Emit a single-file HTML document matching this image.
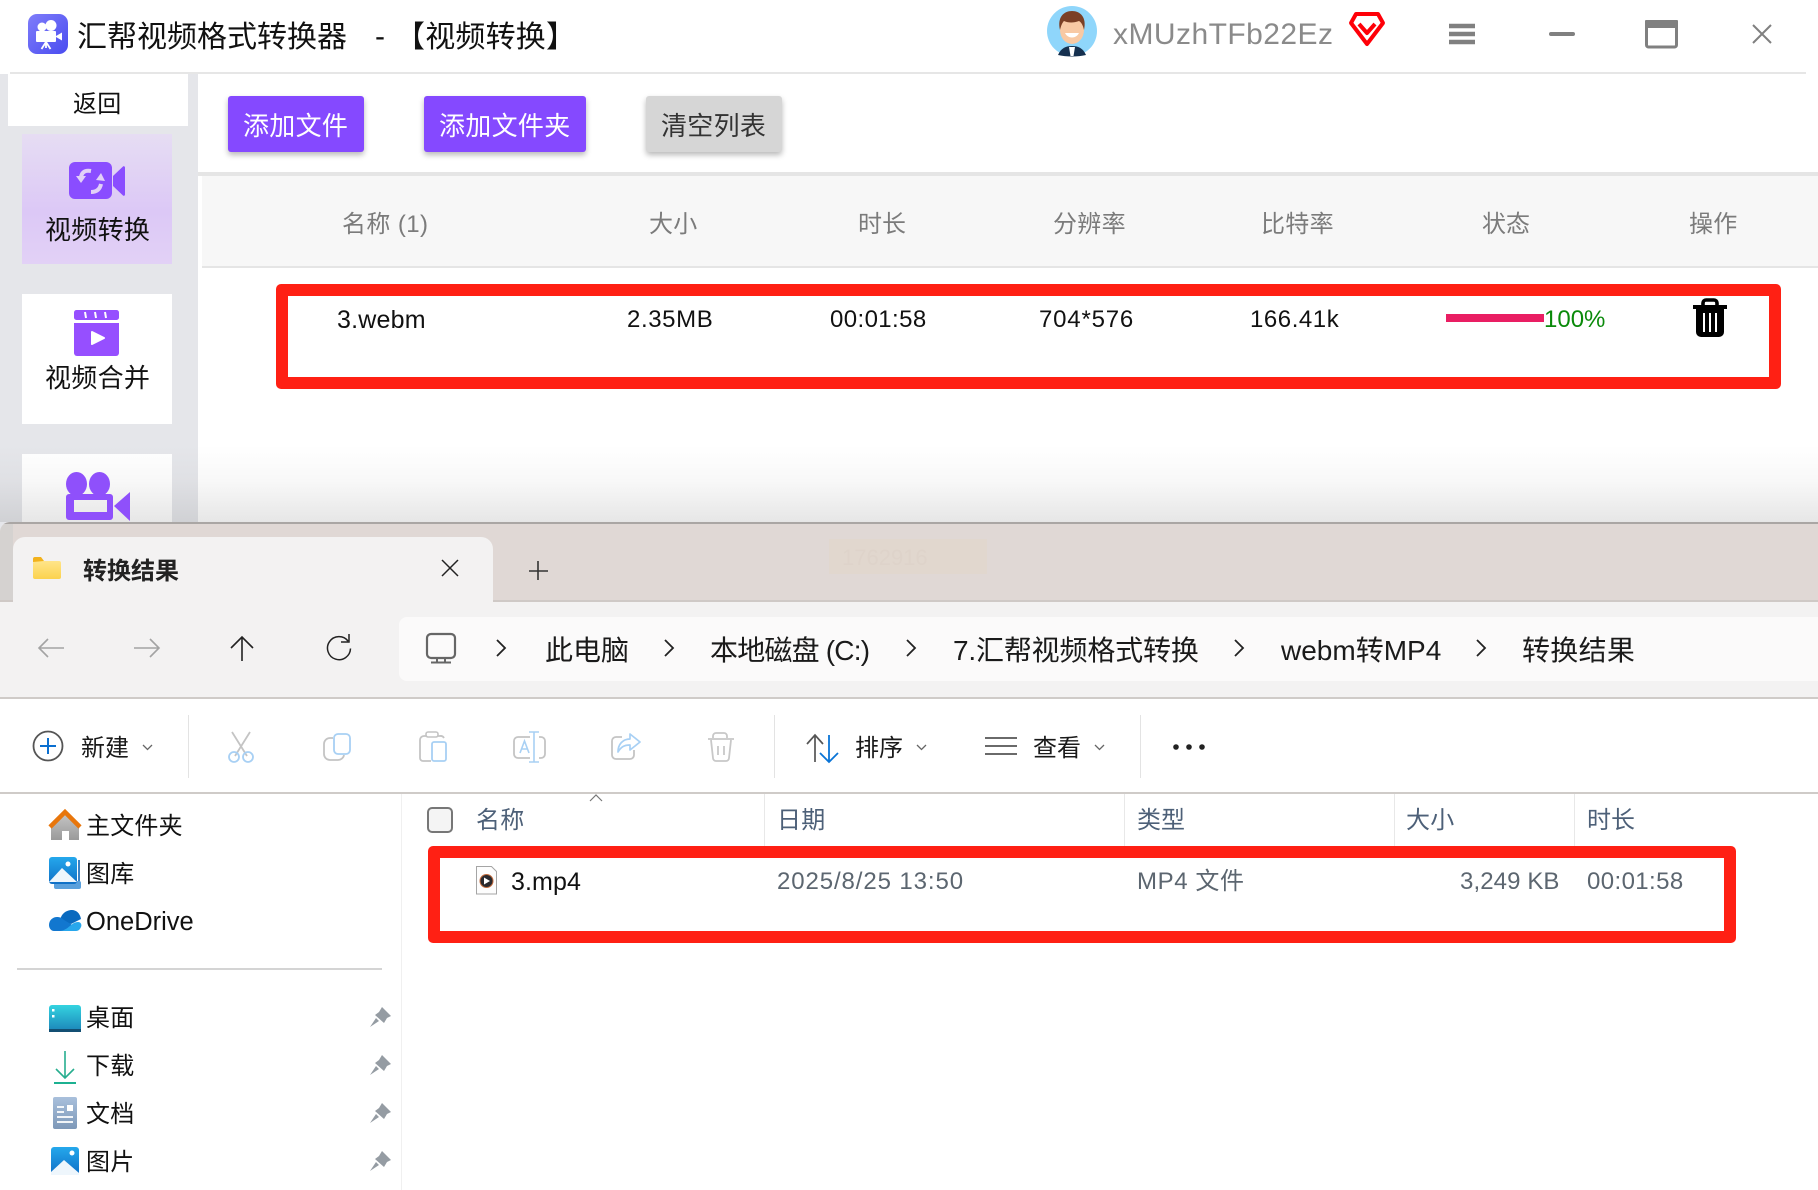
<!DOCTYPE html>
<html lang="zh-CN"><head><meta charset="utf-8"><title>汇帮视频格式转换器</title>
<style>
html,body{margin:0;padding:0;background:#fff}
#p{position:relative;width:1818px;height:1190px;overflow:hidden;background:#fff;font-family:"Liberation Sans","Noto Sans CJK SC",sans-serif;color:#111}
.b{position:absolute}
.t{position:absolute;white-space:nowrap;line-height:0;height:0;font-size:24px}
svg.o{position:absolute;left:0;top:0}
.btn{position:absolute;top:96px;height:56px;border-radius:3px;background:#8549ff;box-shadow:0 3px 6px rgba(0,0,0,.28)}
.h{color:#7b7b7b}
.nv{color:#5c6670}
.hd{color:#4d6078}
</style></head><body><div id="p">
<!-- App -->
<div class="b" style="left:10px;top:72px;width:1796px;height:2px;background:#e6e6e6"></div>
<div class="b" style="left:0;top:74px;width:198px;height:460px;background:#e5e6ea"></div>
<div class="b" style="left:8px;top:74px;width:180px;height:52px;background:#fff"></div>
<div class="b" style="left:22px;top:134px;width:150px;height:130px;background:linear-gradient(#e6ddf3,#dcc8f6 60%,#e2d1f6)"></div>
<div class="b" style="left:22px;top:294px;width:150px;height:130px;background:#fff"></div>
<div class="b" style="left:22px;top:454px;width:150px;height:80px;background:#fff"></div>
<div class="b" style="left:198px;top:172px;width:1620px;height:4px;background:#e5e5e5"></div>
<div class="b" style="left:202px;top:176px;width:1616px;height:90px;background:#f7f7f7"></div>
<div class="b" style="left:202px;top:266px;width:1616px;height:2px;background:#e5e5e5"></div>
<div class="btn" style="left:228px;width:136px"></div>
<div class="btn" style="left:424px;width:162px"></div>
<div class="btn" style="left:646px;width:136px;background:#d6d6d6"></div>

<div class="t" style="left:77px;top:38px;font-size:30px">汇帮视频格式转换器</div>
<div class="t" style="left:375px;top:37px;font-size:30px">-</div>
<div class="t" style="left:395px;top:38px;font-size:30px;letter-spacing:.2px">【视频转换】</div>
<div class="t" style="left:1113px;top:35px;font-size:30px;letter-spacing:.45px;color:#8a8a8a">xMUzhTFb22Ez</div>
<div class="t" style="left:73px;top:105px;letter-spacing:.3px">返回</div>
<div class="t" style="left:45px;top:230px;font-size:26px;letter-spacing:.3px">视频转换</div>
<div class="t" style="left:45px;top:378px;font-size:26px;letter-spacing:.3px">视频合并</div>
<div class="t" style="left:243px;top:126px;font-size:26px;letter-spacing:.3px;color:#fff">添加文件</div>
<div class="t" style="left:439px;top:126px;font-size:26px;letter-spacing:.3px;color:#fff">添加文件夹</div>
<div class="t" style="left:661px;top:126px;font-size:26px;letter-spacing:.3px;color:#333">清空列表</div>

<div class="t h" style="left:342px;top:225px;letter-spacing:.4px">名称 (1)</div>
<div class="t h" style="left:649px;top:225px;letter-spacing:.3px">大小</div>
<div class="t h" style="left:858px;top:225px">时长</div>
<div class="t h" style="left:1053px;top:225px;letter-spacing:.3px">分辨率</div>
<div class="t h" style="left:1261px;top:225px;letter-spacing:.3px">比特率</div>
<div class="t h" style="left:1482px;top:225px">状态</div>
<div class="t h" style="left:1689px;top:225px;letter-spacing:.3px">操作</div>

<div class="t" style="left:337px;top:320px;font-size:25px;letter-spacing:.2px">3.webm</div>
<div class="t" style="left:627px;top:320px;font-size:24px;letter-spacing:.6px">2.35MB</div>
<div class="t" style="left:830px;top:320px;font-size:24px;letter-spacing:.4px">00:01:58</div>
<div class="t" style="left:1039px;top:320px;font-size:24px;letter-spacing:.8px">704*576</div>
<div class="t" style="left:1250px;top:320px;font-size:24px;letter-spacing:.55px">166.41k</div>
<div class="b" style="left:1446px;top:314px;width:98px;height:8px;background:#e91e63"></div>
<div class="t" style="left:1544px;top:320px;font-size:24px;color:#0a8a0a">100%</div>
<div class="b" style="left:276px;top:284px;width:1505px;height:105px;box-sizing:border-box;border:12px solid #ff2014;border-radius:5px"></div>

<!-- fade above explorer -->
<div class="b" style="left:0;top:445px;width:1818px;height:77px;background:linear-gradient(rgba(90,90,90,0),rgba(90,90,90,.04) 45%,rgba(90,90,90,.15))"></div>

<!-- Explorer -->
<div class="b" style="left:0;top:522px;width:1818px;height:668px;background:#fff;border-radius:10px 0 0 0;overflow:hidden">
 <div class="b" style="left:0;top:0;width:1818px;height:79px;background:#e0d8d5;border-top:2px solid #aaa6a4;box-sizing:border-box"></div>
 <div class="b" style="left:0;top:2px;width:13px;height:77px;background:#d5d2d0"></div>
 <div class="b" style="left:829px;top:17px;width:158px;height:35px;background:#e1d7ce"></div>
 <div class="t" style="left:842px;top:36px;font-size:22px;color:#ded3ca">1762916</div>
 <div class="b" style="left:0;top:78px;width:1818px;height:2px;background:#cfc9c6"></div>
 <div class="b" style="left:0;top:80px;width:1818px;height:95px;background:#f3f2f2"></div>
 <div class="b" style="left:13px;top:15px;width:480px;height:70px;background:#f3f2f2;border-radius:12px 12px 0 0"></div>
 <div class="b" style="left:399px;top:95px;width:1419px;height:64px;background:#fbfafa;border-radius:8px 0 0 8px"></div>
 <div class="b" style="left:0;top:175px;width:1818px;height:2px;background:#cfcbc8"></div>
 <div class="b" style="left:0;top:270px;width:1818px;height:2px;background:#cfcbc8"></div>
 <div class="b" style="left:401px;top:272px;width:1px;height:396px;background:#f0f0f0"></div>
 <div class="b" style="left:17px;top:446px;width:365px;height:2px;background:#d4d4d4"></div>
 <div class="b" style="left:764px;top:272px;width:1px;height:52px;background:#e8e8e8"></div>
 <div class="b" style="left:1124px;top:272px;width:1px;height:52px;background:#e8e8e8"></div>
 <div class="b" style="left:1394px;top:272px;width:1px;height:52px;background:#e8e8e8"></div>
 <div class="b" style="left:1574px;top:272px;width:1px;height:52px;background:#e8e8e8"></div>
 <div class="b" style="left:188px;top:193px;width:1px;height:63px;background:#e3e3e3"></div>
 <div class="b" style="left:774px;top:193px;width:1px;height:63px;background:#e3e3e3"></div>
 <div class="b" style="left:1140px;top:193px;width:1px;height:63px;background:#e3e3e3"></div>
 <div class="b" style="left:427px;top:285px;width:26px;height:26px;box-sizing:border-box;border:2px solid #777;border-radius:5px;background:#f4f4f4"></div>
 <div class="b" style="left:428px;top:324px;width:1308px;height:97px;box-sizing:border-box;border:12px solid #ff2014;border-radius:5px"></div>
</div>

<div class="t" style="left:83px;top:572px;font-weight:700;color:#222">转换结果</div>
<div class="t" style="left:545px;top:651px;font-size:28px;color:#1a1a1a">此电脑</div>
<div class="t" style="left:710px;top:651px;font-size:28px;color:#1a1a1a;letter-spacing:-.8px">本地磁盘 (C:)</div>
<div class="t" style="left:953px;top:651px;font-size:28px;color:#1a1a1a;letter-spacing:-.17px">7.汇帮视频格式转换</div>
<div class="t" style="left:1281px;top:651px;font-size:28px;color:#1a1a1a">webm转MP4</div>
<div class="t" style="left:1522px;top:651px;font-size:28px;color:#1a1a1a;letter-spacing:.3px">转换结果</div>
<div class="t" style="left:81px;top:749px;color:#1a1a1a">新建</div>
<div class="t" style="left:855px;top:749px;color:#1a1a1a">排序</div>
<div class="t" style="left:1033px;top:749px;color:#1a1a1a">查看</div>

<div class="t" style="left:86px;top:827px;letter-spacing:.2px">主文件夹</div>
<div class="t" style="left:86px;top:875px;letter-spacing:.2px">图库</div>
<div class="t" style="left:86px;top:922px;font-size:25.500px">OneDrive</div>
<div class="t" style="left:86px;top:1019px;letter-spacing:.2px">桌面</div>
<div class="t" style="left:86px;top:1067px;letter-spacing:.2px">下载</div>
<div class="t" style="left:86px;top:1115px;letter-spacing:.2px">文档</div>
<div class="t" style="left:86px;top:1163px;letter-spacing:.2px">图片</div>

<div class="t hd" style="left:476px;top:821px;letter-spacing:.3px">名称</div>
<div class="t hd" style="left:777px;top:821px;letter-spacing:.3px">日期</div>
<div class="t hd" style="left:1137px;top:821px">类型</div>
<div class="t hd" style="left:1406px;top:821px;letter-spacing:.2px">大小</div>
<div class="t hd" style="left:1587px;top:821px">时长</div>
<div class="t" style="left:511px;top:882px;font-size:25px;letter-spacing:.1px">3.mp4</div>
<div class="t nv" style="left:777px;top:882px;letter-spacing:.9px">2025/8/25 13:50</div>
<div class="t nv" style="left:1137px;top:882px;letter-spacing:.6px">MP4 文件</div>
<div class="t nv" style="left:1460px;top:882px;letter-spacing:.1px">3,249 KB</div>
<div class="t nv" style="left:1587px;top:882px;letter-spacing:.4px">00:01:58</div>

<svg class="o" width="1818" height="1190" viewBox="0 0 1818 1190" fill="none">
<defs>
<linearGradient id="g1" x1="0" y1="0" x2="1" y2="1"><stop offset="0" stop-color="#7f7dfa"/><stop offset="1" stop-color="#4a4cf0"/></linearGradient>
<linearGradient id="fd" x1="0" y1="0" x2="0" y2="1"><stop offset="0" stop-color="#ffe58a"/><stop offset="1" stop-color="#fbd24e"/></linearGradient>
<linearGradient id="bl" x1="0" y1="0" x2="0" y2="1"><stop offset="0" stop-color="#25a8ec"/><stop offset="1" stop-color="#0f6fc6"/></linearGradient>
<linearGradient id="tl" x1="0" y1="0" x2="0" y2="1"><stop offset="0" stop-color="#34d3e0"/><stop offset="1" stop-color="#1b82b8"/></linearGradient>
<linearGradient id="gr" x1="0" y1="0" x2="0" y2="1"><stop offset="0" stop-color="#c8c8c8"/><stop offset="1" stop-color="#9a9a9a"/></linearGradient>
<linearGradient id="dc" x1="0" y1="0" x2="0" y2="1"><stop offset="0" stop-color="#a9c0dc"/><stop offset="1" stop-color="#7d98b8"/></linearGradient>
</defs>
<!-- app logo -->
<rect x="28" y="14" width="40" height="40" rx="9" fill="url(#g1)"/>
<circle cx="42" cy="27" r="4.500" fill="#fff"/><circle cx="51" cy="25.500" r="5.500" fill="#fff"/>
<rect x="36" y="31" width="20" height="11" rx="1" fill="#fff"/><path d="M56 36l6-3.500v8l-6-3.500z" fill="#fff"/>
<path d="M46 42l-4.500 7M46 42l4.500 7M46 42v6" stroke="#fff" stroke-width="1.800"/>
<!-- avatar -->
<circle cx="1072" cy="31" r="25" fill="#8fd6fb"/>
<path d="M1058 55c3-7 8-9 14-9s11 2 14 9c-8 2-20 2-28 0z" fill="#15304f"/>
<path d="M1069 47h6l-1.500 9h-3z" fill="#fff"/>
<ellipse cx="1072" cy="30" rx="12" ry="14" fill="#f8c9a4"/>
<path d="M1060 30c-3-13 4-19 12-19s15 6 12 19c-1-5-3-8-5-9-5 2-11 2-15 0-2 2-3 5-4 9z" fill="#7b3f25"/>
<path d="M1065 33c3 6 11 6 14 0z" fill="#fff"/>
<!-- vip -->
<path d="M1356 14h22l5 9-16 21-16-21z" stroke="#ff0008" stroke-width="4" stroke-linejoin="round"/>
<path d="M1359 24l8 9 8-9" stroke="#ff0008" stroke-width="4" stroke-linejoin="round"/>
<!-- window -->
<path d="M1449 26h26M1449 34h26M1449 42h26" stroke="#808080" stroke-width="4.500"/>
<path d="M1551 34h22" stroke="#808080" stroke-width="4" stroke-linecap="round"/>
<rect x="1646.500" y="21.500" width="30" height="25.500" rx="2" stroke="#808080" stroke-width="3"/><rect x="1645" y="20" width="33" height="8" rx="1" fill="#808080"/>
<path d="M1753 25l18 18M1771 25l-18 18" stroke="#808080" stroke-width="2"/>
<!-- sidebar icons -->
<rect x="69" y="162" width="43" height="37" rx="6" fill="#8a4dff"/><path d="M113 176l10-9.500a1.200 1.200 0 012 1v27a1.200 1.200 0 01-2 1l-10-9.500z" fill="#8a4dff"/>
<path d="M91 171c-6-1-9 1-10 6" stroke="#e2d0f7" stroke-width="4"/><path d="M76 176h10l-5 7z" fill="#e2d0f7"/>
<path d="M91 192c6 0 9-3 10-8" stroke="#e2d0f7" stroke-width="4"/><path d="M96 180l9 1-4-8z" fill="#e2d0f7"/>
<rect x="74" y="310" width="45" height="10" rx="2.500" fill="#964fff"/><path d="M85 312l1 6M95 312l1 6M105 312l1 6" stroke="#fff" stroke-width="2"/>
<path d="M74 323h45v30a3 3 0 01-3 3H77a3 3 0 01-3-3z" fill="#964fff"/><path d="M92 332l12 6-12 6z" fill="#fff" stroke="#fff" stroke-linejoin="round" stroke-width="2"/>
<ellipse cx="76.500" cy="484" rx="10.500" ry="12" fill="#8f50fb"/><ellipse cx="99.500" cy="484" rx="10.500" ry="12" fill="#8f50fb"/>
<path d="M66 497a3 3 0 013-3h41a3 3 0 013 3v20a3 3 0 01-3 3H69a3 3 0 01-3-3zM74 500v12h33v-12z" fill-rule="evenodd" fill="#8f50fb"/>
<path d="M114 506l16-14v29z" fill="#8f50fb"/>
<!-- trash -->
<path d="M1693 307h34" stroke="#000" stroke-width="4"/><path d="M1703 306v-3a3 3 0 013-3h8a3 3 0 013 3v3" stroke="#000" stroke-width="3.600"/>
<path d="M1696 308h28v24a5 5 0 01-5 5h-18a5 5 0 01-5-5z" fill="#000"/>
<path d="M1704 313v19M1710 313v19M1716 313v19" stroke="#fff" stroke-width="2"/>
<!-- tab -->
<path d="M33 563a2 2 0 012-2h24a2 2 0 012 2v14a2 2 0 01-2 2H35a2 2 0 01-2-2z" fill="url(#fd)"/>
<path d="M33 562v-3a2 2 0 012-2h6l3 4z" fill="#f2b21c"/>
<path d="M442 560l16 16M458 560l-16 16" stroke="#222" stroke-width="1.500"/>
<path d="M538 561v19M529 571h19" stroke="#333" stroke-width="1.600"/>
<!-- nav -->
<path d="M40 648h24M48 639l-9 9 9 9" stroke="#a3a3a3" stroke-width="1.600"/>
<path d="M134 648h24M150 639l9 9-9 9" stroke="#a3a3a3" stroke-width="1.600"/>
<path d="M242 661v-24M231 648l11-11 11 11" stroke="#222" stroke-width="1.600"/>
<path d="M348 641a11.500 11.500 0 10 2.500 7.500M349 634v8h-8" stroke="#222" stroke-width="1.500"/>
<rect x="427" y="634" width="28" height="24" rx="4" stroke="#666" stroke-width="2.200"/><path d="M437 658v4M445 658v4M431 662.500h20" stroke="#666" stroke-width="2"/>
<path d="M497 640l8 8-8 8M665 640l8 8-8 8M907 640l8 8-8 8M1235 640l8 8-8 8M1477 640l8 8-8 8" stroke="#222" stroke-width="1.800"/>
<!-- command bar -->
<circle cx="48" cy="746" r="14.500" stroke="#555" stroke-width="1.800"/><path d="M48 738v16M40 746h16" stroke="#0a6fd0" stroke-width="2"/>
<path d="M143 745l4.500 4.500 4.500-4.500M917 745l4.500 4.500 4.500-4.500M1095 745l4.500 4.500 4.500-4.500" stroke="#666" stroke-width="1.300"/>
<path d="M232 732l15 24M250 732l-15 24" stroke="#c4c4c4" stroke-width="1.800"/><circle cx="234" cy="757" r="5" stroke="#a8d0f4" stroke-width="1.800"/><circle cx="248" cy="757" r="5" stroke="#a8d0f4" stroke-width="1.800"/>
<path d="M333 738h-3a6 6 0 00-6 6v10a6 6 0 006 6h8a6 6 0 006-5" stroke="#c4c4c4" stroke-width="1.800"/><rect x="334" y="734" width="16" height="20" rx="4" stroke="#a8d0f4" stroke-width="1.800"/>
<path d="M426 736h-2a4 4 0 00-4 4v18a3 3 0 003 3h8M438 736h2a4 4 0 014 2" stroke="#c4c4c4" stroke-width="1.800"/><rect x="426" y="732" width="12" height="5" rx="2" stroke="#c4c4c4" stroke-width="1.600"/><rect x="432" y="742" width="14" height="19" rx="2" stroke="#a8d0f4" stroke-width="1.800"/>
<path d="M530 737h-12a4 4 0 00-4 4v13a4 4 0 004 4h12M539 737h2a4 4 0 014 4v13a4 4 0 01-4 4h-2" stroke="#c4c4c4" stroke-width="1.800"/><path d="M534 732v30M529 732h10M529 762h10M520 753l4.500-12 4.500 12M522 749h5" stroke="#a8d0f4" stroke-width="1.600"/>
<path d="M622 737h-6a4 4 0 00-4 4v14a4 4 0 004 4h14a4 4 0 004-4v-5" stroke="#c4c4c4" stroke-width="1.800"/><path d="M630 734l10 8-10 8v-5c-6 0-9 2-12 7 0-8 5-13 12-13z" stroke="#a8d0f4" stroke-width="1.700" stroke-linejoin="round"/>
<path d="M708 739h26M713 738v-2a3 3 0 013-3h8a3 3 0 013 3v2M711 740l2 18a3 3 0 003 3h10a3 3 0 003-3l2-18M718 746v9M724 746v9" stroke="#c8c8c8" stroke-width="1.800"/>
<path d="M815 762v-27M807 744l8-9 8 9" stroke="#555" stroke-width="1.700"/><path d="M829 735v27M820 753l9 9 9-9" stroke="#0a74d6" stroke-width="1.800"/>
<path d="M985 738h32M985 746h32M985 754h32" stroke="#555" stroke-width="1.700"/>
<circle cx="1176" cy="747" r="2.800" fill="#222"/><circle cx="1189" cy="747" r="2.800" fill="#222"/><circle cx="1202" cy="747" r="2.800" fill="#222"/>
<path d="M590 801l6-6 6 6" stroke="#777" stroke-width="1.200"/>
<!-- nav tree icons -->
<path d="M51 826l14-14 14 14v14H69v-9h-7v9H51z" fill="url(#gr)"/><path d="M50 827l15-15 15 15" stroke="#e8760c" stroke-width="4.500"/>
<path d="M79 860v26" stroke="#3a82c6" stroke-width="2"/><rect x="54" y="881" width="27" height="8" rx="2" fill="#5aa0dc"/>
<rect x="49" y="857" width="28" height="27" rx="3" fill="url(#bl)"/><path d="M49 882l13-14 15 14z" fill="#eef6fc"/><circle cx="68" cy="864" r="2.500" fill="#fff"/>
<path d="M60 921c1-8 7-11 12-11 4 0 8 3 9 9l-10 5z" fill="#0a6abf"/><path d="M49 925c0-5 4-8 8-8 3 0 5 1 7 3l10 6-11 5h-9c-3 0-5-3-5-6z" fill="#1277cf"/>
<path d="M60 931c9-1 11-9 18-9 3 0 4 3 3 5-1 2-2 4-5 4z" fill="#28a7ec"/>
<rect x="49" y="1005" width="32" height="27" rx="3" fill="url(#tl)"/><rect x="49" y="1029" width="32" height="3" fill="#134f73"/><rect x="52" y="1009" width="2.500" height="2.500" fill="#fff"/><rect x="52" y="1015" width="2.500" height="2.500" fill="#fff"/>
<path d="M65 1051v27M56 1069l9 9 9-9" stroke="#27ae8f" stroke-width="1.600"/><path d="M54 1083h22" stroke="#1cb191" stroke-width="2"/>
<rect x="53" y="1097" width="24" height="32" rx="2" fill="url(#dc)"/><path d="M57 1107h7M57 1112h7M57 1117h16M57 1122h16" stroke="#fff" stroke-width="1.800"/><rect x="67" y="1105" width="6" height="6" fill="#fff"/>
<rect x="51" y="1147" width="28" height="28" rx="3" fill="url(#bl)"/><path d="M51 1175v-3l13-12 15 13v2z" fill="#eef6fc"/><circle cx="72" cy="1153" r="2.500" fill="#fff"/>
<g fill="#959ca3">
<path transform="translate(370,1007)" d="M12 0l9 9-4 2-3 5-9-8 4-3zM6 11l3 3-9 6z"/>
<path transform="translate(370,1055)" d="M12 0l9 9-4 2-3 5-9-8 4-3zM6 11l3 3-9 6z"/>
<path transform="translate(370,1103)" d="M12 0l9 9-4 2-3 5-9-8 4-3zM6 11l3 3-9 6z"/>
<path transform="translate(370,1151)" d="M12 0l9 9-4 2-3 5-9-8 4-3zM6 11l3 3-9 6z"/>
</g>
<!-- mp4 file -->
<path d="M476.500 866.500h15l5 5v22.500h-20z" fill="#fdfdfd" stroke="#a5a5a5"/>
<circle cx="486.500" cy="881" r="6.500" fill="#2a2a2e" stroke="#c26a3c" stroke-width="1"/><path d="M484 877.500l6 3.500-6 3.500z" fill="#fff"/>
</svg>
</div></body></html>
